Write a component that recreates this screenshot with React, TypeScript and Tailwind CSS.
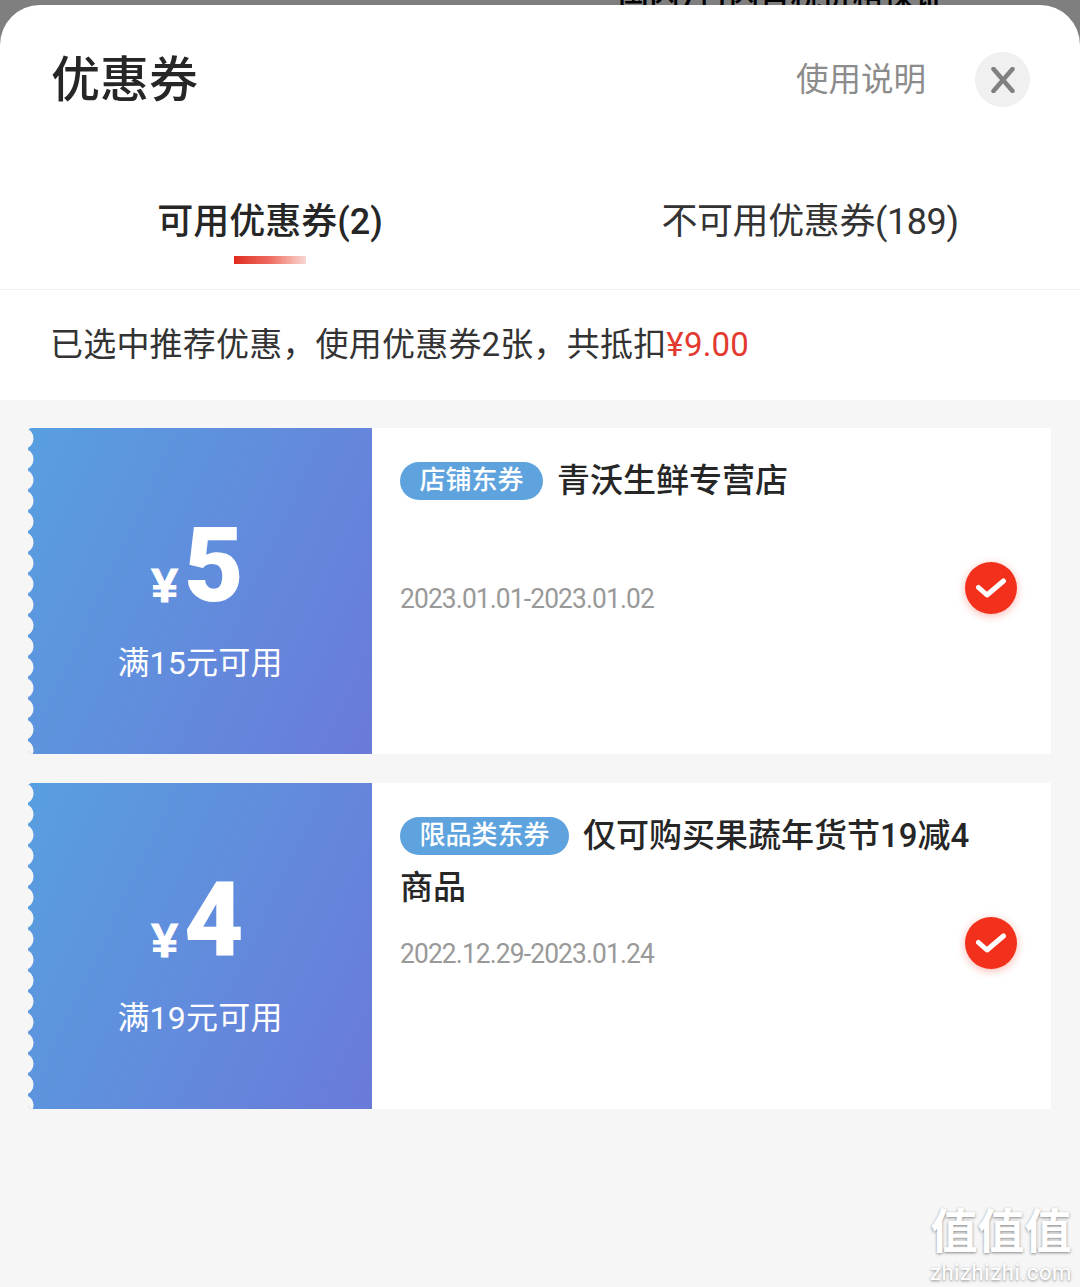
import type { ReactNode } from "react";

const font = "[font-family:Roboto,'Noto_Sans_CJK_SC',sans-serif]";

function Check() {
  return (
    <div className="mb-[6px] flex h-[52px] w-[52px] shrink-0 items-center justify-center rounded-full bg-[#f2301c] shadow-[0_2px_8px_rgba(242,48,28,0.35)]">
      <svg width="32" height="24" viewBox="0 0 32 24" fill="none">
        <path d="M3.5 11.5 L12 19 L28.5 5" stroke="white" strokeWidth="5" strokeLinecap="round" strokeLinejoin="round" />
      </svg>
    </div>
  );
}

function Coupon({ value, cond, tag, title, date }: { value: string; cond: string; tag: string; title: ReactNode; date: string }) {
  return (
    <div className="flex h-[326px] bg-white">
      <div className="relative flex w-[344px] shrink-0 flex-col items-center overflow-hidden rounded-l-[4px] bg-[linear-gradient(115deg,#589fe0,#6a7ad9)] text-white">
        <div className="absolute inset-y-0 left-0 w-[6px] bg-[radial-gradient(circle_at_-5px_10.4px,#f6f6f6_10.2px,transparent_10.8px)] bg-[length:6px_20.8px]" />
        <div className="mt-[80px] flex h-[116px] items-end pr-[5px]">
          <span className="mr-[6px] mb-[13px] text-[48px] leading-[50px] font-bold [font-family:'Liberation_Sans',sans-serif] [-webkit-text-stroke:1px_white]">¥</span>
          <span className="text-[103px] leading-[116px] font-black [font-family:Roboto,sans-serif]">{value}</span>
        </div>
        <div className="mt-[17px] text-[32px] leading-[44px] tracking-[0.2px]">{cond}</div>
      </div>
      <div className="flex min-w-0 flex-1 items-center pr-[34px] pl-[28px]">
        <div className="min-w-0 flex-1 self-start pt-[27px]">
          <div className="h-[104px] text-[33px] leading-[52px] font-medium whitespace-nowrap text-[#262626]">
            <span className="mr-[14px] inline-block h-[38px] rounded-full bg-[#5ea3dd] px-[19.5px] align-[3px] text-[26px] leading-[36px] font-medium text-white">{tag}</span>
            {title}
          </div>
          <div className="mt-[14px] origin-left scale-x-[0.94] text-[28px] leading-[52px] tracking-[-0.9px] text-[#999999]">{date}</div>
        </div>
        <Check />
      </div>
    </div>
  );
}

export default function App() {
  return (
    <div className={`relative h-[1287px] w-[1080px] overflow-hidden bg-[#7f7f7f] ${font}`}>
      <div className="h-[5px] overflow-hidden pl-[618px] text-[31px] leading-[10px] whitespace-nowrap text-black">
        <div className="-mt-[8px] font-medium">国内7日内含税价格保证</div>
      </div>
      <div className="flex h-[1282px] flex-col overflow-hidden rounded-t-[40px] bg-white">
        <div className="flex h-[145px] shrink-0 items-start pt-[40px] pr-[50px] pl-[51px]">
          <div className="flex-1 text-[49px] leading-[72px] font-medium text-[#262626]">优惠券</div>
          <div className="mt-[15px] mr-[49px] text-[32.5px] leading-[40px] text-[#8c8c8c]">使用说明</div>
          <div className="mt-[7px] flex h-[55px] w-[55px] items-center justify-center rounded-full bg-[#f0f0f0]">
            <svg width="26" height="26" viewBox="0 0 26 26" fill="none">
              <path d="M3.5 2 L22.5 24 M22.5 2 L3.5 24" stroke="#808080" strokeWidth="4.5" strokeLinecap="round" />
            </svg>
          </div>
        </div>
        <div className="flex h-[140px] shrink-0 border-b border-[#f0f0f0]">
          <div className="flex w-[540px] flex-col items-center pt-[48px]">
            <div className="text-[36px] leading-[48px] font-medium text-[#262626]">可用优惠券(2)</div>
            <div className="mt-[10px] h-[8px] w-[72px] bg-linear-to-r from-[#e0281c] via-[#ee6a60] to-[#f6d8d4]" />
          </div>
          <div className="flex w-[540px] flex-col items-center pt-[48px]">
            <div className="text-[36px] leading-[48px] tracking-[-0.4px] text-[#333333]">不可用优惠券(189)</div>
          </div>
        </div>
        <div className="flex h-[110px] shrink-0 items-center pl-[50px] text-[33px] tracking-[0.2px] text-[#333333]">
          已选中推荐优惠，使用优惠券2张，共抵扣<span className="text-[#e23a30]">¥9.00</span>
        </div>
        <div className="relative flex flex-1 flex-col gap-[29px] bg-[#f6f6f6] pt-[28px] pr-[29px] pl-[28px]">
          <Coupon value="5" cond="满15元可用" tag="店铺东券" title="青沃生鲜专营店" date="2023.01.01-2023.01.02" />
          <Coupon value="4" cond="满19元可用" tag="限品类东券" title={<>仅可购买果蔬年货节19减4<br />商品</>} date="2022.12.29-2023.01.24" />
          <div className="absolute right-[8px] bottom-[1px] flex flex-col items-center text-white [text-shadow:0_1px_3px_rgba(0,0,0,0.45)]">
            <div className="text-[47px] leading-[56px] font-bold">值值值</div>
            <div className="text-[22px] leading-[26px] tracking-[0.6px]">zhizhizhi.com</div>
          </div>
        </div>
      </div>
    </div>
  );
}
